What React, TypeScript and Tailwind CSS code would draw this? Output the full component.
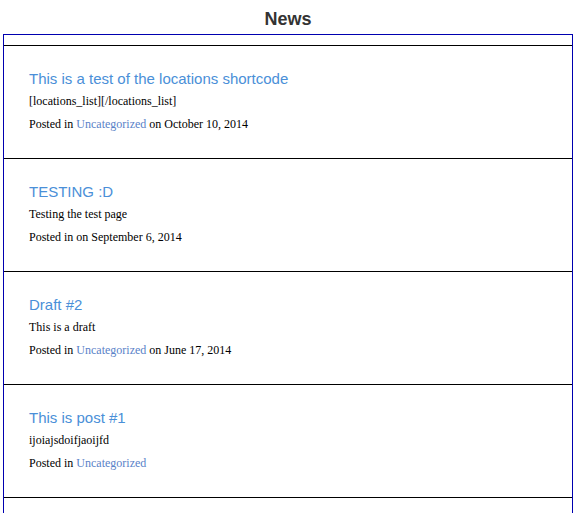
const posts = [
  {
    title: 'This is a test of the locations shortcode',
    body: '[locations_list][/locations_list]',
    category: 'Uncategorized',
    date: 'October 10, 2014',
  },
  {
    title: 'TESTING :D',
    body: 'Testing the test page',
    category: '',
    date: 'September 6, 2014',
  },
  {
    title: 'Draft #2',
    body: 'This is a draft',
    category: 'Uncategorized',
    date: 'June 17, 2014',
  },
  {
    title: 'This is post #1',
    body: 'ijoiajsdoifjaoijfd',
    category: 'Uncategorized',
    date: '',
  },
];

function PostItem({ title, body, category, date }: (typeof posts)[number]) {
  return (
    <div className="border-t border-black h-[113px] px-[25px] pt-[23px]">
      <h2 className="font-['Liberation_Sans',Arial,sans-serif] text-[15px] leading-[20px] text-[#4a8fd8]">
        {title}
      </h2>
      <p className="mt-[4px] font-['Liberation_Serif','Times_New_Roman',serif] text-[12px] leading-[16px] text-black">
        {body}
      </p>
      <p className="mt-[7px] font-['Liberation_Serif','Times_New_Roman',serif] text-[12px] leading-[16px] text-black">
        Posted in {category && <a className="text-[#5a82c8]">{category}</a>}
        {date && ` on ${date}`}
      </p>
    </div>
  );
}

export default function App() {
  return (
    <div className="bg-white min-h-screen">
      <div className="w-[570px] ml-[3px]">
        <h1 className="text-center pt-[8px] pb-[4px] font-['Liberation_Sans',Arial,sans-serif] font-bold text-[18px] leading-[22px] text-[#333]">
          News
        </h1>
        <div className="border border-[#0000b0] border-b-0 pt-[10px]">
          {posts.map((p) => (
            <PostItem key={p.title} {...p} />
          ))}
          <div className="border-t border-black h-[20px]" />
        </div>
      </div>
    </div>
  );
}
